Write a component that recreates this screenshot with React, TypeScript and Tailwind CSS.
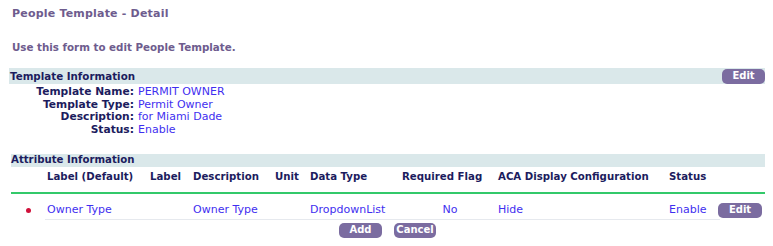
import React from 'react'

const infoRows = [
  { label: 'Template Name:', value: 'PERMIT OWNER' },
  { label: 'Template Type:', value: 'Permit Owner' },
  { label: 'Description:', value: 'for Miami Dade' },
  { label: 'Status:', value: 'Enable' },
]

const cols = 'grid grid-cols-[36px_103px_43px_82px_35px_92px_96px_171px_49px_1fr]'

function Btn({ children, className = '' }: { children: React.ReactNode; className?: string }) {
  return (
    <button
      className={`h-[15px] rounded-[5px] bg-[#7b6ca0] text-[10px] font-bold leading-none text-white ${className}`}
    >
      {children}
    </button>
  )
}

export default function App() {
  return (
    <div className="h-[246px] w-[773px] overflow-hidden bg-white pl-[9px] pr-[8px] text-[11px] leading-[12.5px] [font-family:'DejaVu_Sans',Verdana,sans-serif]">
      {/* Page heading */}
      <h1 className="pl-[3px] pt-[8px] text-[11px] font-bold tracking-[0.2px] text-[#6e5c8e]">
        People Template - Detail
      </h1>
      <p className="pl-[3px] pt-[20px] text-[10.3px] font-bold text-[#6e5c8e]">
        Use this form to edit People Template.
      </p>

      {/* Template Information */}
      <div className="mt-[15px] flex h-[16px] items-center justify-between bg-[#dae8ea]">
        <span className="pl-[1px] text-[10.3px] font-bold text-[#1c1c5e]">Template Information</span>
        <Btn className="w-[43px]">Edit</Btn>
      </div>
      <div className="mt-[2px] grid grid-cols-[126px_1fr]">
        {infoRows.map((r) => (
          <React.Fragment key={r.label}>
            <span className="pr-[1px] text-right text-[10.7px] font-bold text-[#1c1c5e]">{r.label}</span>
            <span className="pl-[3px] text-[#3f2ff0]">{r.value}</span>
          </React.Fragment>
        ))}
      </div>

      {/* Attribute Information */}
      <div className="ml-[2px] mt-[18px] flex h-[13px] items-center bg-[#dae8ea]">
        <span className="text-[10.2px] font-bold text-[#1c1c5e]">Attribute Information</span>
      </div>
      <div className={`${cols} ml-[2px] mt-[4px] text-[10.2px] font-bold text-[#1c1c5e]`}>
        <span />
        <span>Label (Default)</span>
        <span>Label</span>
        <span>Description</span>
        <span>Unit</span>
        <span>Data Type</span>
        <span>Required Flag</span>
        <span>ACA Display Configuration</span>
        <span>Status</span>
        <span />
      </div>
      <div className="ml-[2px] mt-[8px] h-[2px] bg-[#33c96a]" />
      <div className={`${cols} ml-[2px] mt-[9px] items-center text-[#3f2ff0]`}>
        <span className="flex justify-center">
          <span className="mr-[2px] h-[5px] w-[5px] rounded-full bg-[#d0103a]" />
        </span>
        <span>Owner Type</span>
        <span />
        <span>Owner Type</span>
        <span />
        <span>DropdownList</span>
        <span className="text-center">No</span>
        <span>Hide</span>
        <span>Enable</span>
        <span>
          <Btn className="w-[44px]">Edit</Btn>
        </span>
      </div>
      <div className="ml-[36px] mt-[1px] h-px w-[675px] bg-[#e6e9ee]" />
      <div className="mt-[3px] flex justify-center gap-[12px] pl-[1px]">
        <Btn className="w-[43px]">Add</Btn>
        <Btn className="w-[42px]">Cancel</Btn>
      </div>
    </div>
  )
}
